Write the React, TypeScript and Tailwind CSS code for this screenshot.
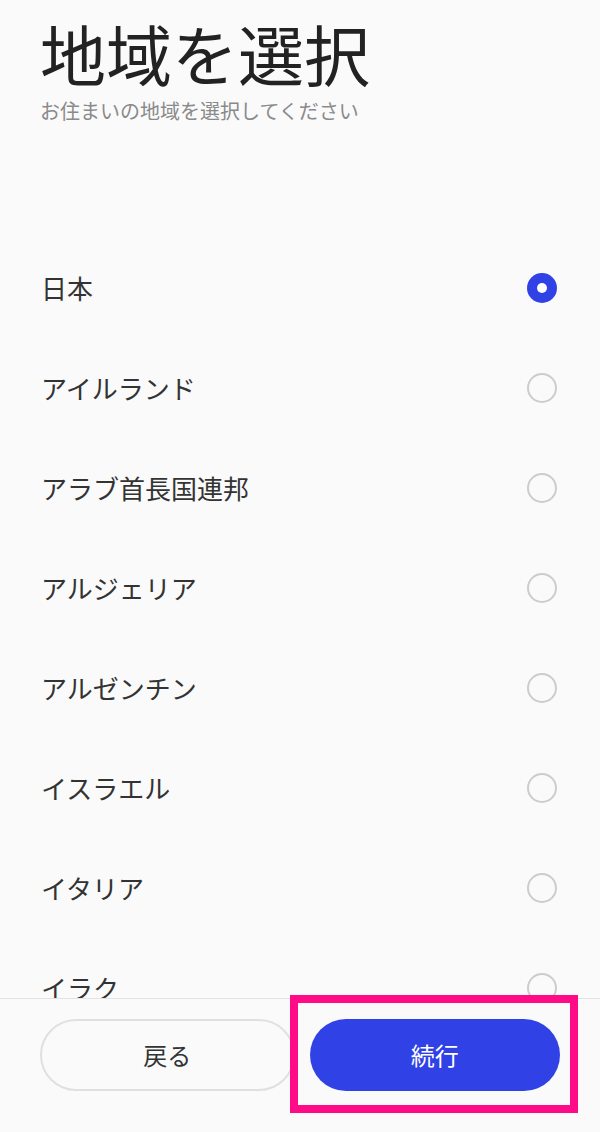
import React from "react";

const regions = [
  "日本",
  "アイルランド",
  "アラブ首長国連邦",
  "アルジェリア",
  "アルゼンチン",
  "イスラエル",
  "イタリア",
  "イラク",
];

export default function App() {
  const selected = 0;
  return (
    <div
      className="relative flex h-[1132px] w-[600px] flex-col overflow-hidden bg-[#fafafa]"
      style={{ fontFamily: '"Noto Sans CJK JP", "Noto Sans", sans-serif' }}
    >
      <div className="h-[238px] shrink-0 px-[40px] pt-[19px]">
        <h1 className="text-[66px] leading-none font-normal text-[#222222]">地域を選択</h1>
        <p className="mt-[16px] text-[20px] leading-none text-[#8a8a8a]">
          お住まいの地域を選択してください
        </p>
      </div>
      <div className="flex-1 overflow-hidden">
        {regions.map((r, i) => (
          <div key={r} className="flex h-[100px] items-center justify-between pl-[41px] pr-[43px]">
            <span className="text-[26px] leading-none text-[#333333]">{r}</span>
            {i === selected ? (
              <span className="flex h-[30px] w-[30px] items-center justify-center rounded-full bg-[#3041e6]">
                <span className="h-[10px] w-[10px] rounded-full bg-white" />
              </span>
            ) : (
              <span className="h-[30px] w-[30px] rounded-full border-2 border-[#cccccc]" />
            )}
          </div>
        ))}
      </div>
      <div className="flex h-[134px] shrink-0 gap-[15px] border-t border-[#e3e3e3] bg-[#fafafa] px-[40px] pt-[20px]">
        <button className="flex h-[72px] flex-1 items-center justify-center rounded-full border-2 border-[#e0e0e0] text-[24px] text-[#333333]">
          戻る
        </button>
        <button className="flex h-[72px] flex-1 items-center justify-center rounded-full bg-[#3041e6] text-[24px] text-white">
          続行
        </button>
      </div>
      <div className="pointer-events-none absolute left-[290px] top-[995px] h-[118px] w-[288px] border-[8px] border-[#ff0a87]" />
    </div>
  );
}
